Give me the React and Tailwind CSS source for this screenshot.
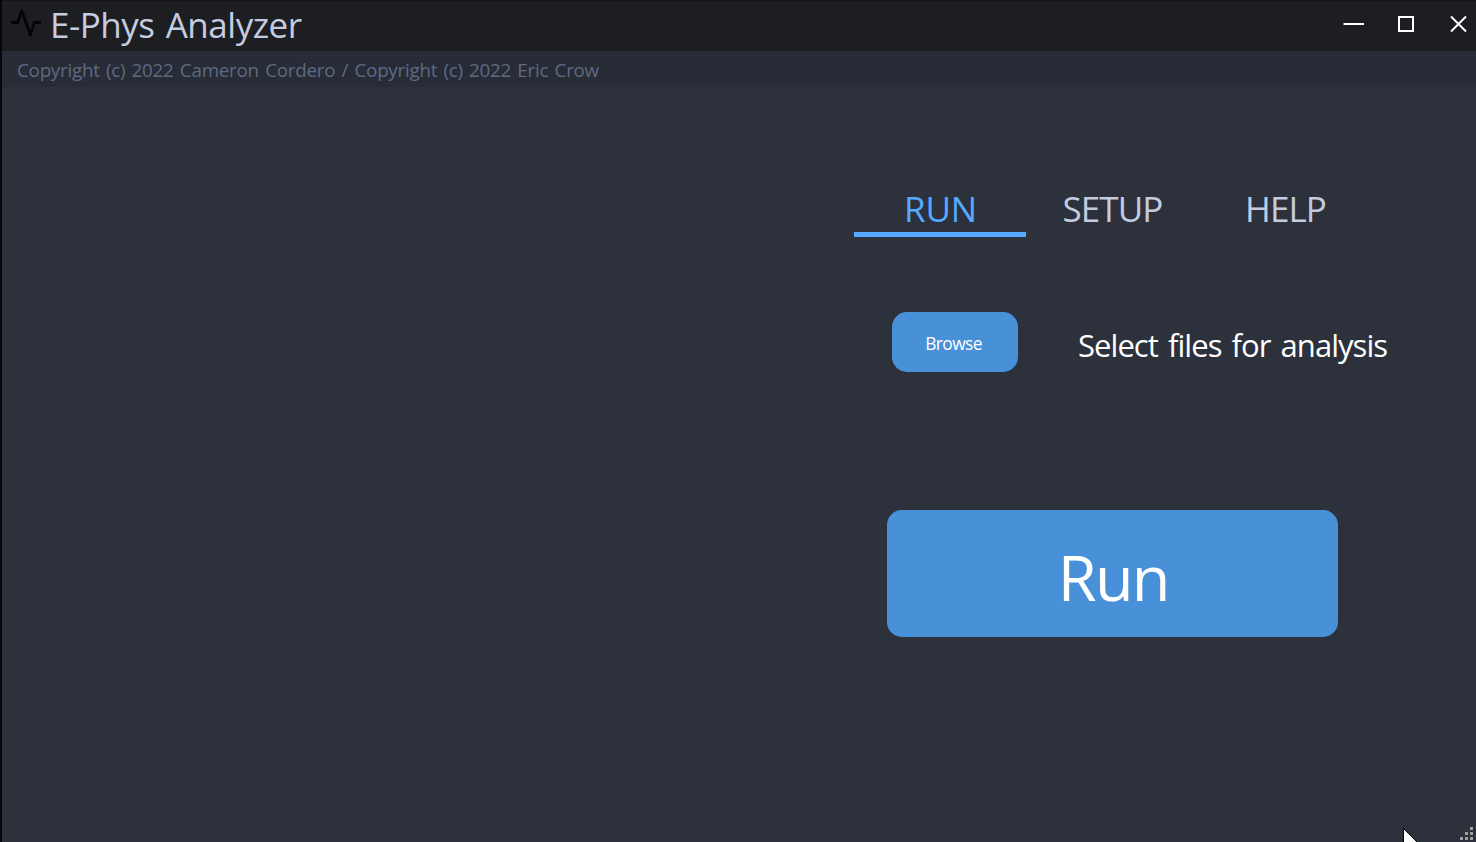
const TABS = ['RUN', 'SETUP', 'HELP'];

function TitleBar() {
  return (
    <header className="flex h-[51px] shrink-0 items-start border-t border-[#141518] bg-[#1d1e21]">
      <svg className="ml-2 mt-[5px] h-[34px] w-[34px]" viewBox="0 0 34 34" fill="none" stroke="#040506" strokeWidth="2.8" strokeLinecap="round" strokeLinejoin="round">
        <path d="M2.5 16.5H7.8L11.8 4.5L20.3 29L24.3 16.5H30" />
      </svg>
      <h1 className="ml-[6px] text-[35px] leading-[48px] tracking-[-0.48px] [word-spacing:2.5px] text-[#c5cce0]">E-Phys Analyzer</h1>
      <svg className="ml-auto h-[50px] w-[136px]" viewBox="0 0 136 50" fill="none" stroke="#fff" strokeWidth="2">
        <path d="M3.5 23H24" />
        <rect x="59" y="16" width="14" height="14" />
        <path d="M111 15.5L126 30.5M126 15.5L111 30.5" />
      </svg>
    </header>
  );
}

function Tabs() {
  return (
    <nav className="flex h-[54px]">
      {TABS.map((tab, i) => (
        <button
          key={tab}
          className={
            i === 0
              ? 'w-[172px] border-b-[5px] border-[#55aaff] pl-px pt-[2px] text-[35px] leading-[48px] tracking-[-0.2px] text-[#55aaff]'
              : 'w-[173px] border-b-[5px] border-transparent pt-[2px] text-[35px] leading-[48px] tracking-[-0.9px] text-[#c3ccdf]'
          }
        >
          {tab}
        </button>
      ))}
    </nav>
  );
}

export default function App() {
  return (
    <div className="relative flex h-[842px] w-[1476px] flex-col overflow-hidden whitespace-nowrap border-l-2 border-[#060709] bg-[#2c313c] font-['Open_Sans','Noto_Sans',sans-serif]">
      <TitleBar />
      <div className="h-9 shrink-0 bg-[#272c36] pl-[15px] text-[18.8px] leading-[38px] tracking-[-0.25px] [word-spacing:1.7px] text-[#5f6a82]">
        <p>Copyright (c) 2022 Cameron Cordero / Copyright (c) 2022 Eric Crow</p>
      </div>
      <main className="flex flex-1 justify-end pt-24">
        <section className="w-[622px]">
          <Tabs />
          <div className="mt-[75px] flex h-[60px] items-center pl-[37.5px]">
            <button className="h-[60px] w-[126px] rounded-[15px] bg-[#4891d9] pr-[2px] pt-[2px] text-[17.4px] tracking-[-0.6px] text-white">Browse</button>
            <p className="ml-[60.5px] pt-[6px] text-[31px] leading-[40px] tracking-[-0.95px] [word-spacing:3px] text-white">Select files for analysis</p>
          </div>
          <button className="ml-[33px] mt-[138px] h-[127px] w-[451.4px] rounded-[15px] bg-[#4891d9] pl-px pt-[6px] text-[63px] leading-none tracking-[-1.8px] text-white">Run</button>
        </section>
      </main>
      <svg className="absolute bottom-0 right-0 h-4 w-[18px]" viewBox="0 0 18 16" fill="#a09c97">
        <path d="M12 1h3v3h-3zM7 6h3v3H7zM12 6h3v3h-3zM2 11h3v3H2zM7 11h3v3H7zM12 11h3v3h-3z" />
      </svg>
      <svg className="absolute bottom-0 left-[1401px] h-[14px] w-4" viewBox="0 0 16 14" fill="#fff" stroke="#000">
        <path d="M.5 .5V22L15.5 15.5Z" />
      </svg>
    </div>
  );
}
